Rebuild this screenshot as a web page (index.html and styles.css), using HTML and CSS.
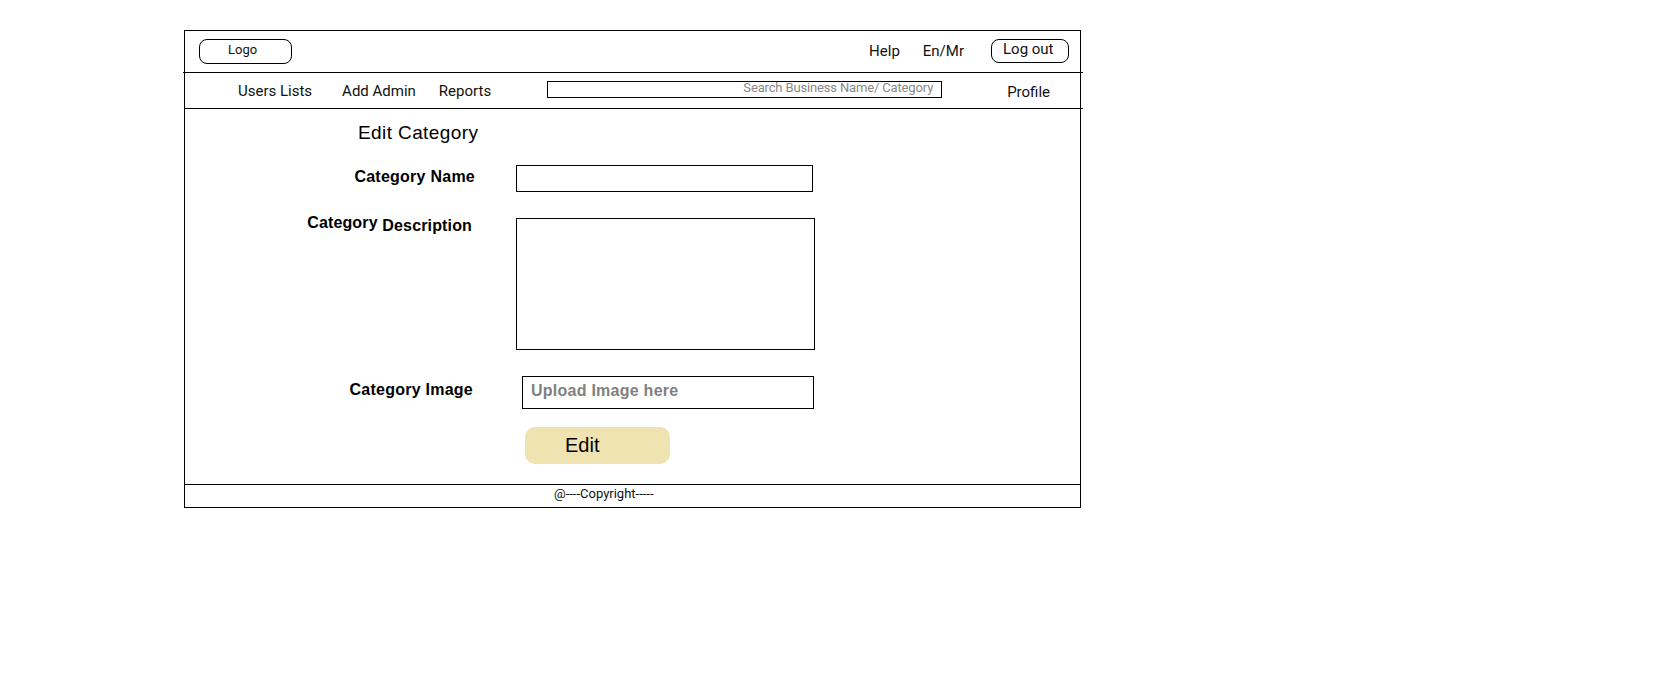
FILE: index.html
```html
<!DOCTYPE html>
<html lang="en">
<head>
<meta charset="utf-8">
<title>Edit Category</title>
<link rel="stylesheet" href="styles.css">
</head>
<body>
<div class="frame">
  <header class="topbar">
    <div class="logo">Logo</div>
    <div class="top-links">
      <span class="help">Help</span>
      <span class="lang">En/Mr</span>
      <span class="logout">Log out</span>
    </div>
  </header>
  <nav class="navbar">
    <span class="nav-link users">Users Lists</span>
    <span class="nav-link add-admin">Add Admin</span>
    <span class="nav-link reports">Reports</span>
    <div class="search">Search Business Name/ Category</div>
    <span class="nav-link profile">Profile</span>
  </nav>
  <main class="content">
    <h1 class="title">Edit Category</h1>
    <div class="row row-name">
      <div class="label label-name">Category Name</div>
      <div class="field name-input"></div>
    </div>
    <div class="row row-desc">
      <div class="label label-desc"><span class="raise">Category</span> Description</div>
      <div class="field desc-input"></div>
    </div>
    <div class="row row-image">
      <div class="label label-image">Category Image</div>
      <div class="field upload">Upload Image here</div>
    </div>
    <div class="edit-btn">Edit</div>
  </main>
  <footer class="footer">@----Copyright-----</footer>
</div>
</body>
</html>
```

FILE: styles.css
```css
* {
  box-sizing: border-box;
}

body {
  margin: 0;
  background: #fff;
  color: #000;
  font-family: "Liberation Sans", Arial, sans-serif;
}

.frame {
  margin: 30px 0 0 184px;
  width: 897px;
  border: 1px solid #000;
}

/* top bar */
.topbar {
  display: flex;
  align-items: flex-start;
  height: 42px;
  margin: 0 -3px 0 -2px;
  padding: 8px 14px 0 16px;
  border-bottom: 1px solid #000;
  font-family: Roboto, "Liberation Sans", sans-serif;
  font-size: 15px;
  color: #111;
}

.logo {
  width: 93px;
  height: 25px;
  border: 1px solid #000;
  border-radius: 8px;
  padding-left: 28px;
  font-size: 13px;
  line-height: 19px;
}

.top-links {
  margin-left: auto;
  display: flex;
  align-items: flex-start;
}

.help,
.lang {
  line-height: 24px;
}

.lang {
  margin-left: 23px;
}

.logout {
  margin-left: 27px;
  width: 78px;
  height: 24px;
  border: 1px solid #000;
  border-radius: 8px;
  padding-left: 11px;
  line-height: 19px;
}

/* nav bar */
.navbar {
  display: flex;
  align-items: flex-start;
  height: 36px;
  margin-right: -3px;
  border-bottom: 1px solid #000;
  font-family: Roboto, "Liberation Sans", sans-serif;
  font-size: 15px;
  line-height: 18px;
  color: #111;
}

.nav-link {
  margin-top: 9px;
}

.users {
  margin-left: 53px;
}

.add-admin {
  margin-left: 30px;
}

.reports {
  margin-left: 23px;
}

.search {
  margin: 8px 0 0 56px;
  width: 395px;
  height: 17px;
  border: 1px solid #000;
  padding-right: 8px;
  text-align: right;
  font-size: 13px;
  line-height: 12px;
  letter-spacing: -0.15px;
  color: #888;
}

.profile {
  margin-top: 10px;
  margin-left: 65px;
}

/* content */
.content {
  height: 375px;
  padding-top: 13px;
}

.title {
  margin: 0 0 21px 173px;
  font-size: 19px;
  font-weight: normal;
  line-height: 22px;
  letter-spacing: 0.4px;
}

.row {
  display: flex;
  align-items: flex-start;
}

.row-desc,
.row-image {
  margin-top: 26px;
}

.label {
  width: 290px;
  text-align: right;
  font-size: 16px;
  font-weight: bold;
  line-height: 18px;
  letter-spacing: 0.25px;
}

.label-name {
  margin-top: 3px;
}

.label-desc {
  margin-top: -4px;
  padding-right: 3px;
  letter-spacing: 0.15px;
}

.raise {
  vertical-align: 3px;
}

.label-image {
  margin-top: 5px;
  padding-right: 2px;
}

.field {
  border: 1px solid #000;
}

.name-input {
  margin-left: 41px;
  width: 297px;
  height: 27px;
}

.desc-input {
  margin-left: 41px;
  width: 299px;
  height: 132px;
}

.upload {
  margin-left: 47px;
  width: 292px;
  height: 33px;
  padding-left: 8px;
  font-size: 16px;
  font-weight: bold;
  line-height: 28px;
  letter-spacing: 0.25px;
  color: #808080;
}

.edit-btn {
  margin: 18px 0 0 340px;
  width: 145px;
  height: 37px;
  border-radius: 10px;
  background: #efe3b1;
  padding-left: 40px;
  font-size: 20px;
  line-height: 37px;
}

/* footer */
.footer {
  height: 23px;
  border-top: 1px solid #000;
  padding-left: 369px;
  font-family: Roboto, "Liberation Sans", sans-serif;
  font-size: 13px;
  line-height: 18px;
  color: #111;
}
```
